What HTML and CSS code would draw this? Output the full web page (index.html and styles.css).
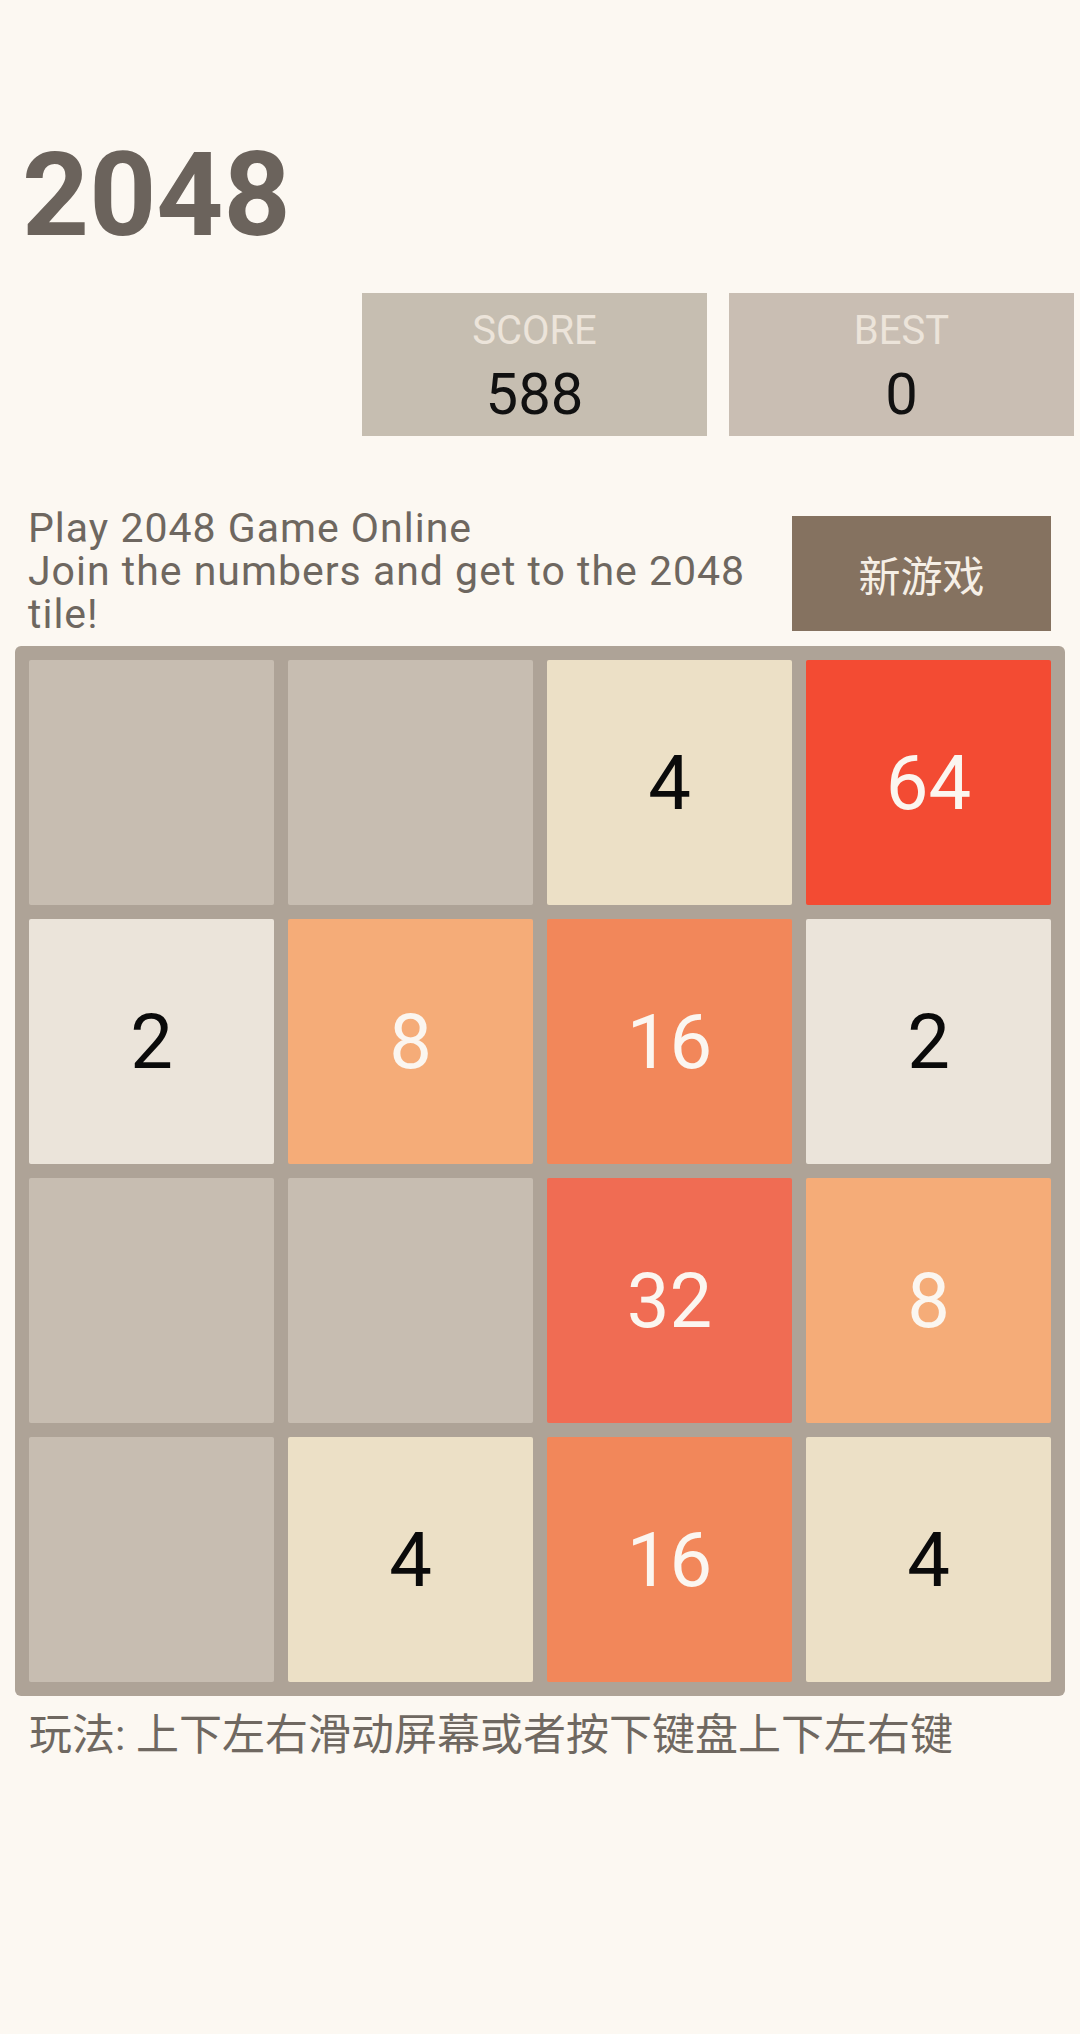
FILE: index.html
```html
<!DOCTYPE html>
<html lang="zh">
<head>
<meta charset="utf-8">
<title>2048</title>
<link rel="stylesheet" href="styles.css">
</head>
<body>
<div class="page">
  <header class="top">
    <h1 class="title">2048</h1>
    <div class="scores">
      <div class="score-box score">
        <div class="label">SCORE</div>
        <div class="value">588</div>
      </div>
      <div class="score-box best">
        <div class="label">BEST</div>
        <div class="value">0</div>
      </div>
    </div>
  </header>

  <section class="intro">
    <p class="intro-text">Play 2048 Game Online<br>Join the numbers and get to the 2048 tile!</p>
    <button class="new-game">新游戏</button>
  </section>

  <div class="board">
    <div class="tile"></div>
    <div class="tile"></div>
    <div class="tile t4">4</div>
    <div class="tile t64">64</div>

    <div class="tile t2">2</div>
    <div class="tile t8">8</div>
    <div class="tile t16">16</div>
    <div class="tile t2">2</div>

    <div class="tile"></div>
    <div class="tile"></div>
    <div class="tile t32">32</div>
    <div class="tile t8">8</div>

    <div class="tile"></div>
    <div class="tile t4">4</div>
    <div class="tile t16">16</div>
    <div class="tile t4">4</div>
  </div>

  <p class="howto">玩法: 上下左右滑动屏幕或者按下键盘上下左右键</p>
</div>
</body>
</html>
```

FILE: styles.css
```css
html, body {
  margin: 0;
  padding: 0;
  background: #fcf8f2;
}

body {
  font-family: Roboto, "Noto Sans CJK SC", sans-serif;
  color: #6e6760;
}

.page {
  width: 1080px;
  min-height: 2034px;
  display: flex;
  flex-direction: column;
}

.top {
  display: flex;
  flex-direction: column;
}

.title {
  margin: 135px 0 0 0;
  padding-left: 22px;
  font-family: Roboto, sans-serif;
  font-weight: 700;
  font-size: 117px;
  line-height: 120px;
  color: #6b635c;
}

.scores {
  margin-top: 38px;
  display: flex;
  justify-content: flex-end;
  gap: 22px;
  padding-right: 6px;
}

.score-box {
  width: 345px;
  height: 143px;
  box-sizing: border-box;
  padding-top: 15px;
  text-align: center;
  background: #c6beb1;
}

.score-box.best {
  background: #c9beb3;
}

.label {
  font-size: 40px;
  line-height: 46px;
  color: #ece4da;
}

.value {
  margin-top: 10px;
  font-size: 58px;
  line-height: 60px;
  color: #111111;
}

.intro {
  margin-top: 71px;
  display: flex;
  align-items: flex-start;
  padding-left: 28px;
  padding-right: 29px;
  gap: 20px;
}

.intro-text {
  flex: 1;
  margin: 0;
  font-size: 41px;
  line-height: 43px;
  letter-spacing: 1px;
  color: #6e6760;
}

.new-game {
  flex: none;
  width: 259px;
  height: 115px;
  border: none;
  margin: 9px 0 0 0;
  padding: 0;
  background: #857260;
  color: #f6efe6;
  font-family: Roboto, "Noto Sans CJK SC", sans-serif;
  font-size: 42px;
}

.board {
  margin: 10px 0 0 15px;
  width: 1050px;
  height: 1050px;
  box-sizing: border-box;
  padding: 14px;
  border-radius: 6px;
  background: #aea397;
  display: grid;
  grid-template-columns: repeat(4, 245px);
  grid-template-rows: repeat(4, 245px);
  gap: 14px;
}

.tile {
  border-radius: 2px;
  background: #c7bdb1;
  display: flex;
  align-items: center;
  justify-content: center;
  font-family: Roboto, sans-serif;
  font-size: 76px;
  color: #fbf6f0;
}

.t2 { background: #ebe4da; color: #0a0a0a; }
.t4 { background: #ece0c6; color: #0a0a0a; }
.t8 { background: #f5ac78; }
.t16 { background: #f2875a; }
.t32 { background: #f06c53; }
.t64 { background: #f34b33; }

.howto {
  margin: 14px 0 0 0;
  padding-left: 29px;
  font-size: 43px;
  line-height: 50px;
  color: #6f6861;
}
```
